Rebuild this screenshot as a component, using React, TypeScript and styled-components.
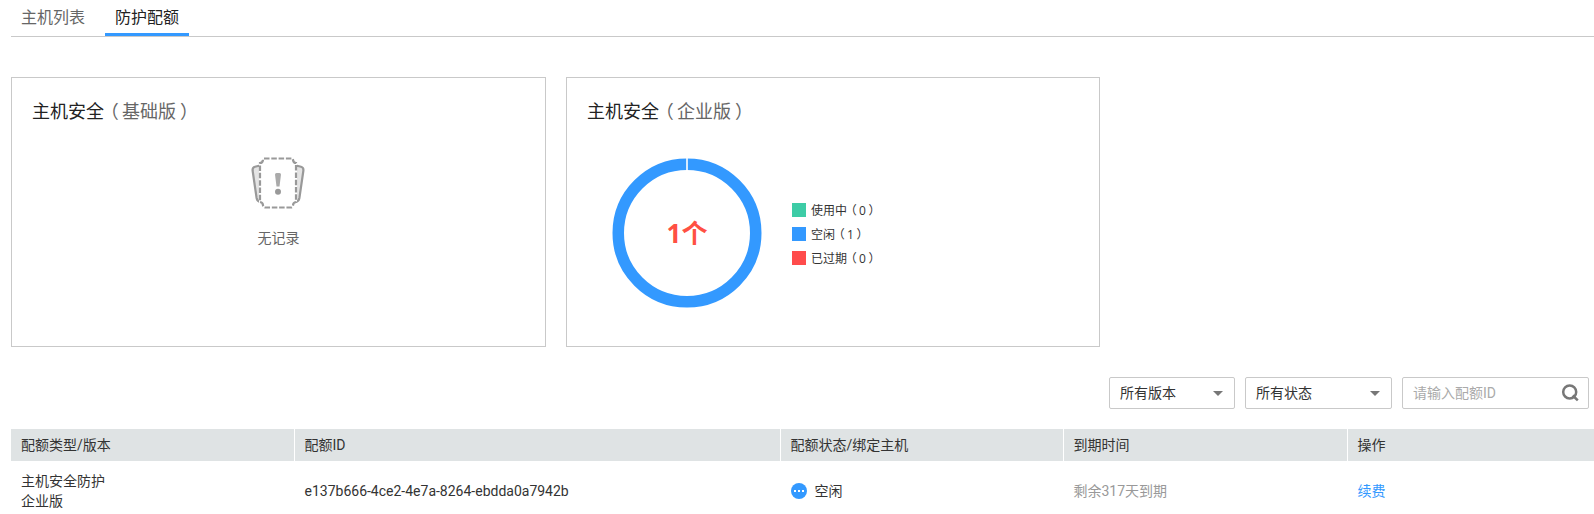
import React from 'react';
import styled, { createGlobalStyle } from 'styled-components';

const GlobalStyle = createGlobalStyle`
  *, *::before, *::after { box-sizing: border-box; }
  body {
    margin: 0;
    background: #fff;
    color: #333;
    font: 400 14px/20px Roboto, "Noto Sans CJK SC", sans-serif;
    overflow: hidden;
  }
`;

const Page = styled.main`
  height: 514px;
  padding-left: 11px;
  overflow: hidden;
`;

const Tabs = styled.nav`
  display: flex;
  gap: 10px;
  height: 37px;
  border-bottom: 1px solid #c9c9c9;
`;

const Tab = styled.a<{ $active?: boolean }>`
  height: 36px;
  padding: 0 10px;
  font-size: 16px;
  line-height: 36px;
  color: ${(p) => (p.$active ? '#222' : '#666')};
  border-bottom: 3px solid ${(p) => (p.$active ? '#3399ff' : 'transparent')};
`;

const Cards = styled.section`
  display: flex;
  gap: 20px;
  margin-top: 40px;
`;

const Card = styled.article<{ $width: number }>`
  width: ${(p) => p.$width}px;
  height: 270px;
  border: 1px solid #c9c9c9;
  padding: 20px;
`;

const CardTitle = styled.h2`
  margin: 0;
  font-size: 18px;
  font-weight: 400;
  line-height: 28px;
  color: #222;
`;

const Edition = styled.span`
  color: #666;
`;

/* Full-width brackets, nudged to the middle of their cell. */
const Bracket = styled.span<{ $shift: number }>`
  margin: 0 ${(p) => -p.$shift}em 0 ${(p) => p.$shift}em;
`;

const Empty = styled.div`
  display: flex;
  flex-direction: column;
  align-items: center;
  margin-top: 31px;
  padding-right: 2px;
  color: #666;
`;

const EmptyText = styled.span`
  margin: 19px 0 0 2px;
`;

const ChartRow = styled.div`
  display: flex;
  align-items: center;
  gap: 30px;
  margin: 32px 0 0 25px;
`;

const ChartCount = styled.text`
  font: 700 26px "Open Sans", "Noto Sans CJK SC", sans-serif;
  fill: #ff5043;
`;

const Legend = styled.ul`
  display: flex;
  flex-direction: column;
  gap: 10px;
  margin: 2px 0 0;
  padding: 0;
  list-style: none;
`;

const LegendItem = styled.li`
  display: flex;
  align-items: center;
  gap: 5px;
  height: 14px;
`;

const LegendText = styled.span`
  padding-top: 2px;
  font: 12px/14px "Open Sans", "Noto Sans CJK SC", sans-serif;
  white-space: nowrap;
`;

const Swatch = styled.i<{ $color: string }>`
  flex: none;
  width: 14px;
  height: 14px;
  background: ${(p) => p.$color};
`;

const Filters = styled.div`
  display: flex;
  justify-content: flex-end;
  gap: 10px;
  margin: 30px 5px 20px 0;
`;

const Field = styled.div<{ $width: number }>`
  display: flex;
  align-items: center;
  justify-content: space-between;
  width: ${(p) => p.$width}px;
  height: 32px;
  padding: 0 9px 0 10px;
  border: 1px solid #c9c9c9;
  border-radius: 2px;
`;

const Caret = styled.i`
  margin-right: 2px;
  border: 5px solid transparent;
  border-top-color: #777;
  border-bottom: 0;
`;

const Placeholder = styled.span`
  color: #aaa;
`;

const Row = styled.div`
  display: grid;
  grid-template-columns: 284px 486px 283px 284px 1fr;
`;

const HeadCell = styled.div`
  height: 32px;
  padding-left: 9.5px;
  line-height: 32px;
  background: #dfe3e4;
  border-right: 1px solid #fff;
  &:first-child { padding-left: 10px; }
  &:last-child { border-right: 0; }
`;

const Cell = styled.div<{ $color?: string }>`
  display: flex;
  align-items: center;
  gap: 8px;
  height: 60px;
  padding-left: 9.5px;
  color: ${(p) => p.$color ?? '#333'};
  &:first-child { padding-left: 10px; }
`;

const EmptyIcon = () => (
  <svg width="54" height="52" viewBox="0 0 54 52" fill="none" stroke="#999">
    <path d="M9 8.500L4 9.800Q1.300 10.500 1.600 13.500L5.600 41Q6.200 44.500 9.500 45Z" fill="#e4e4e4" strokeWidth="2.200" />
    <path d="M45 8.500L50 9.800Q52.700 10.500 52.400 13.500L48.400 41Q47.800 44.500 44.500 45Z" fill="#e4e4e4" strokeWidth="2.200" />
    <path d="M13 1.500H41Q42 1.500 42 3Q42.500 6 45 6V45Q42 45.500 42 48.500Q41.500 50.500 40 50.500H14Q12.500 50.500 12 48.500Q12 45.500 9 45V6Q11.500 6 12 3Q12 1.500 13 1.500Z" fill="#fff" stroke="#fff" strokeWidth="2" />
    <path d="M13 1.500H41Q42 1.500 42 3Q42.500 6 45 6V45Q42 45.500 42 48.500Q41.500 50.500 40 50.500H14Q12.500 50.500 12 48.500Q12 45.500 9 45V6Q11.500 6 12 3Q12 1.500 13 1.500Z" strokeWidth="2.200" strokeDasharray="5.500 1.800" />
    <path d="M24 17.500Q24 16 25.500 16H28.500Q30 16 30 17.500L28.500 29.500H25.500Z" fill="#aaa" stroke="none" />
    <circle cx="27" cy="34.800" r="3" fill="#999" stroke="none" />
  </svg>
);

const Donut = () => (
  <svg width="150" height="150" viewBox="0 0 150 150">
    <circle cx="75" cy="75" r="68.750" fill="none" stroke="#3399ff" strokeWidth="11.500" />
    <path d="M75 0V12" stroke="#fff" strokeWidth="1.600" />
    <ChartCount x="75" y="85" textAnchor="middle">1个</ChartCount>
  </svg>
);

const SearchIcon = () => (
  <svg width="18" height="18" viewBox="0 0 18 18" fill="none" stroke="#777" strokeWidth="2.500">
    <circle cx="8.700" cy="7.900" r="6.500" />
    <path d="M11.700 11.500L16.800 16.300" />
  </svg>
);

const IdleIcon = () => (
  <svg width="16" height="16" viewBox="0 0 16 16">
    <circle cx="8" cy="8" r="8" fill="#3399ff" />
    <path d="M3 7h2v2H3zM7 7h2v2H7zM11 7h2v2h-2z" fill="#fff" />
  </svg>
);

const legend = [
  { label: '使用中', count: 0, color: '#3dcca6' },
  { label: '空闲', count: 1, color: '#3399ff' },
  { label: '已过期', count: 0, color: '#ff4c4c' },
];

const columns = ['配额类型/版本', '配额ID', '配额状态/绑定主机', '到期时间', '操作'];

const Bracketed = ({ children }: { children: React.ReactNode }) => (
  <><Bracket $shift={-0.18}>（</Bracket>{children}<Bracket $shift={0.22}>）</Bracket></>
);

export default function App() {
  return (
    <Page>
      <GlobalStyle />
      <Tabs>
        <Tab>主机列表</Tab>
        <Tab $active>防护配额</Tab>
      </Tabs>
      <Cards>
        <Card $width={535}>
          <CardTitle>主机安全<Edition><Bracketed>基础版</Bracketed></Edition></CardTitle>
          <Empty>
            <EmptyIcon />
            <EmptyText>无记录</EmptyText>
          </Empty>
        </Card>
        <Card $width={534}>
          <CardTitle>主机安全<Edition><Bracketed>企业版</Bracketed></Edition></CardTitle>
          <ChartRow>
            <Donut />
            <Legend>
              {legend.map((item) => (
                <LegendItem key={item.label}>
                  <Swatch $color={item.color} />
                  <LegendText>{item.label}<Bracketed>{item.count}</Bracketed></LegendText>
                </LegendItem>
              ))}
            </Legend>
          </ChartRow>
        </Card>
      </Cards>
      <Filters>
        <Field $width={126}>所有版本<Caret /></Field>
        <Field $width={147}>所有状态<Caret /></Field>
        <Field $width={187}><Placeholder>请输入配额ID</Placeholder><SearchIcon /></Field>
      </Filters>
      <Row>
        {columns.map((name) => <HeadCell key={name}>{name}</HeadCell>)}
      </Row>
      <Row>
        <Cell><span>主机安全防护<br />企业版</span></Cell>
        <Cell>e137b666-4ce2-4e7a-8264-ebdda0a7942b</Cell>
        <Cell><IdleIcon />空闲</Cell>
        <Cell $color="#999">剩余317天到期</Cell>
        <Cell $color="#3399ff">续费</Cell>
      </Row>
    </Page>
  );
}
